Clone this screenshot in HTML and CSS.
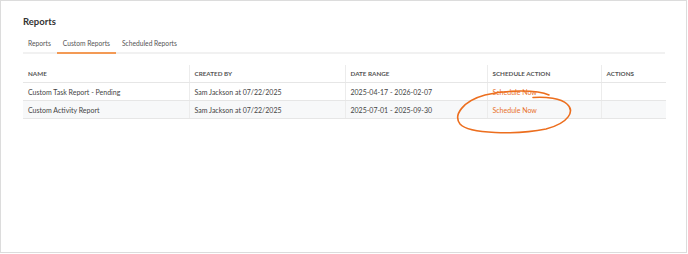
FILE: index.html
```html
<!DOCTYPE html>
<html>
<head>
<meta charset="utf-8">
<link rel="stylesheet" href="styles.css">
</head>
<body>
<div class="frame">
  <h1 class="title">Reports</h1>
  <div class="tabs">
    <div class="tab">Reports</div>
    <div class="tab active">Custom Reports</div>
    <div class="tab">Scheduled Reports</div>
  </div>
  <div class="table-wrap">
    <table class="grid">
      <colgroup>
        <col class="c1"><col class="c2"><col class="c3"><col class="c4"><col class="c5">
      </colgroup>
      <thead>
        <tr><th>NAME</th><th>CREATED BY</th><th>DATE RANGE</th><th>SCHEDULE ACTION</th><th>ACTIONS</th></tr>
      </thead>
      <tbody>
        <tr><td>Custom Task Report - Pending</td><td>Sam Jackson at 07/22/2025</td><td>2025-04-17 - 2026-02-07</td><td><a class="act">Schedule Now</a></td><td></td></tr>
        <tr class="alt"><td>Custom Activity Report</td><td>Sam Jackson at 07/22/2025</td><td>2025-07-01 - 2025-09-30</td><td><a class="act">Schedule Now</a></td><td></td></tr>
      </tbody>
    </table>
  </div>
  <svg class="circle" width="688" height="254" viewBox="0 0 688 254">
    <path d="M548 94 C 536 88.5, 505 89, 484 94 C 462 100, 452 114, 459 123 C 468 133, 515 134, 545 128 C 568 122, 574 110, 566 103 C 560 97.5, 545 95.5, 532 96.5" fill="none" stroke="#ec6e1e" stroke-width="1.6" stroke-linecap="round"/>
  </svg>
</div>
</body>
</html>
```
FILE: styles.css
```css
html, body { margin: 0; padding: 0; background: #fff; }
body { font-family: "Lato", "Open Sans", sans-serif; color: #444; }
.frame {
  box-sizing: border-box;
  width: 687px;
  height: 253px;
  border: 1px solid #dcdcdc;
  padding: 15px 21px 0 22px;
  position: relative;
}
.title {
  margin: 0;
  font-size: 9.5px;
  line-height: 12px;
  font-weight: 700;
  color: #333;
}
.tabs {
  display: flex;
  margin-top: 6px;
  border-bottom: 2px solid #f1f1f1;
  height: 18px;
}
.tab {
  padding: 0 6px;
  font-size: 6.7px;
  line-height: 18px;
  color: #555;
  border-bottom: 2px solid transparent;
  margin-bottom: -2px;
}
.tab:first-child { padding-left: 5px; }
.tab.active { border-bottom-color: #f39a55; }
.table-wrap { margin-top: 11px; }
.grid {
  border-collapse: collapse;
  table-layout: fixed;
  width: 643px;
  font-size: 7px;
}
.c1 { width: 166px; } .c2 { width: 156px; } .c3 { width: 142px; } .c4 { width: 114px; } .c5 { width: 65px; }
.grid th, .grid td {
  text-align: left;
  padding: 0 5px;
  border-left: 1px solid #ececec;
  border-bottom: 1px solid #e6e6e6;
  white-space: nowrap;
}
.grid th:first-child, .grid td:first-child { border-left: none; }
.grid th {
  height: 17px;
  font-size: 6.3px;
  font-weight: 700;
  color: #555;
}
.grid td { height: 17px; color: #444; }
.grid tr.alt td { background: #f7f8f9; }
.act { color: #e8702a; }
.circle { position: absolute; left: 0; top: 0; pointer-events: none; }
```
